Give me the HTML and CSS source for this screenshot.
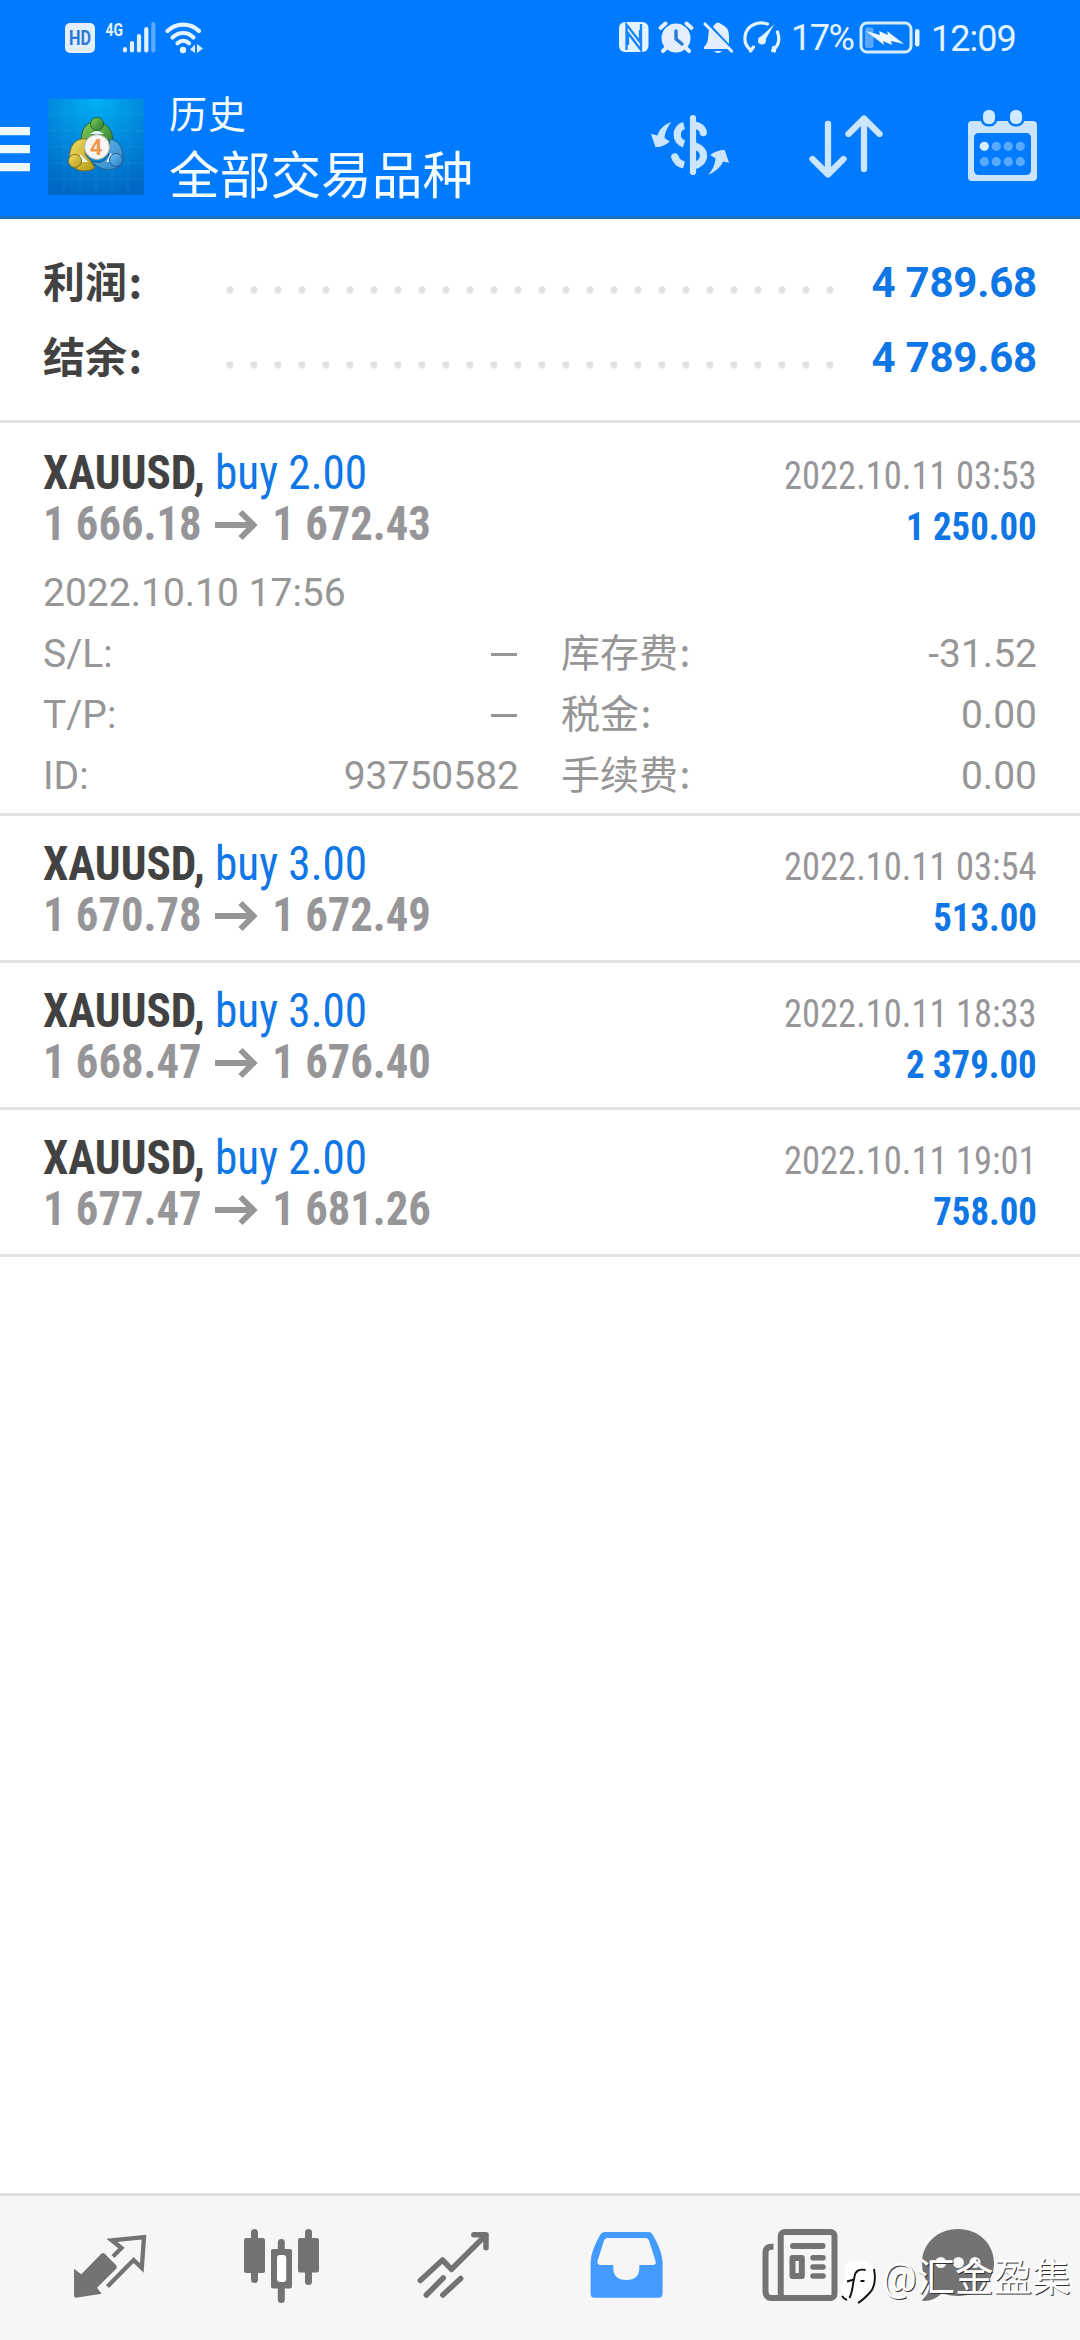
FILE: index.html
```html
<!DOCTYPE html>
<html lang="zh-CN">
<head>
<meta charset="utf-8">
<title>历史</title>
<link rel="stylesheet" href="styles.css">
</head>
<body>
<div class="screen">
  <header class="header">
    <div class="status">
      <svg class="status-hd" viewBox="65 20 31 36"><rect x="65" y="23" width="30" height="30" rx="5" fill="#e3efff"/><text class="hd-text" x="80" y="45" textLength="22" lengthAdjust="spacingAndGlyphs">HD</text></svg>
      <svg class="status-signal" viewBox="105 20 52 36">
        <text class="net-text" x="105.500" y="36" textLength="17.500" lengthAdjust="spacingAndGlyphs">4G</text>
        <g stroke="#e3f1ff" stroke-width="4.200" stroke-linecap="round"><path d="M125 49v1.500M132 43v7.500M139 36v14.500M146.300 29v21.500"/><path d="M153.300 24v26.500" stroke="#5aabff"/></g>
      </svg>
      <svg class="status-wifi" viewBox="164 20 42 36" fill="none" stroke="#e3f4ff" stroke-width="4.200" stroke-linecap="round">
        <path d="M167.500 31C176 22.500 190.500 22.500 199 31M172.500 37.500C178.500 31.500 188 31.500 193.500 37.500M177.500 43.300C181 40 185.500 40 189 43.300"/>
        <circle cx="183" cy="50" r="3.200" fill="#e3f4ff" stroke="none"/>
        <path d="M190 49.500l5-5v8.500zM197 44l6 4.500-6 4.500z" fill="#d7edff" stroke="none"/>
      </svg>
      <span class="status-spacer"></span>
      <svg class="status-icons" viewBox="616 18 170 40">
        <rect x="618" y="22" width="29.500" height="30" rx="6" fill="#e3f4ff"/>
        <path d="M625.500 50V24.500L639 42V30M640 24v26L627 33v12" fill="none" stroke="#1683ff" stroke-width="2.300"/>
        <g fill="#e3efff"><circle cx="675" cy="38" r="14.500"/></g>
        <path d="M659.500 28l5-4.500M690.500 28l-5-4.500M665 48l-3 3M685 48l3 3" stroke="#e3efff" stroke-width="4" stroke-linecap="round"/>
        <path d="M675 31v8l6 5" fill="none" stroke="#2a79d8" stroke-width="3.500" stroke-linecap="round"/>
        <path d="M714 24q3-3 6 0q8 3 8 12v8L712 27zM708 30l20 19h-25v-2q4-4 4-9zM713 51h8q-4 4-8 0z" fill="#e3efff"/>
        <path d="M704 24l26.500 27" stroke="#e3efff" stroke-width="3.200" stroke-linecap="round"/>
        <g fill="none" stroke="#e3f4ff" stroke-width="3.200" stroke-linecap="round"><path d="M750 50C741 44 742 29 753 24.500c4-2 9-2 13.500-.5M776.500 32c2.500 7 1 14-5 18.500"/><path d="M749.500 51l3-4M773.500 51l-1-3.500"/></g>
        <circle cx="761" cy="40.500" r="4" fill="#e3f4ff"/><path d="M758.500 38l15-14-10.500 18z" fill="#e3f4ff"/>
      </svg>
      <span class="status-battery-text">17%</span>
      <svg class="status-battery" viewBox="857 18 64 40">
        <rect x="860" y="23" width="50" height="29" rx="6" fill="none" stroke="#d3ecff" stroke-width="3"/>
        <rect x="864" y="27.500" width="8.500" height="20.500" rx="2" fill="#58a6ff"/>
        <rect x="914" y="29" width="4.500" height="17.500" rx="2.200" fill="#e3f4ff"/>
        <path d="M865 31l14 4-1-4 9 4-1-4 17 13-13-3 1 4-9-4 1 4z" fill="#eef8ff"/>
      </svg>
      <span class="status-time">12:09</span>
    </div>
    <div class="toolbar">
      <svg class="menu" viewBox="0 127 30 45"><path d="M0 127h30v8.300H0zM0 145h30v8.300H0zM0 163h30v8.300H0z" fill="#eef8ff"/></svg>
      <svg class="logo" viewBox="0 0 96 96">
        <defs>
          <radialGradient id="sky" cx=".5" cy="0" r="1"><stop offset="0" stop-color="#00b0f4"/><stop offset=".55" stop-color="#0086db"/><stop offset="1" stop-color="#0068c4"/></radialGradient>
          <linearGradient id="gold" x1="0" y1="0" x2="1" y2="1"><stop offset="0" stop-color="#f3e06a"/><stop offset="1" stop-color="#b59812"/></linearGradient>
          <linearGradient id="leaf" x1="0" y1="0" x2="1" y2="1"><stop offset="0" stop-color="#86cf5c"/><stop offset="1" stop-color="#257b2d"/></linearGradient>
          <linearGradient id="sea" x1="0" y1="0" x2="1" y2="1"><stop offset="0" stop-color="#6fc0f0"/><stop offset="1" stop-color="#2680c8"/></linearGradient>
        </defs>
        <rect width="96" height="96" fill="url(#sky)"/>
        <path d="M16 0v96M32 0v96M48 0v96M64 0v96M80 0v96M0 16h96M0 32h96M0 48h96M0 64h96M0 80h96" stroke="#35b5f2" stroke-opacity=".18"/>
        <path d="M34 46C30 25 46 19 54 24C65 28 68 43 60 52L56 40Q48 30 40 40z" fill="url(#leaf)" stroke="#28632d"/>
        <path d="M39 40C25 38 20 51 22 63C26 73 39 74 47 69L42 61Q34 56 39 42z" fill="url(#gold)" stroke="#716b26"/>
        <path d="M62 40C73 42 77 53 74 64C68 74 51 72 44 62Q54 67 60 57z" fill="url(#sea)" stroke="#245f87"/>
        <path d="M42 35l7-4 7 4zM32 55l-1 8 9 0zM63 54l4 8-9 1z" fill="#e9f5ff"/>
        <circle cx="49" cy="25" r="6.500" fill="url(#leaf)" stroke="#28632d"/>
        <circle cx="27" cy="62" r="6.500" fill="url(#gold)" stroke="#817320"/>
        <circle cx="68" cy="61" r="6.500" fill="url(#sea)" stroke="#245f87"/>
        <circle cx="49" cy="48" r="12.500" fill="#f8f5f5" stroke="#a7b3a4"/>
        <text class="logo-text" x="48" y="56">4</text>
      </svg>
      <div class="titles"><div class="title-small">历史</div><div class="title-large">全部交易品种</div></div>
      <svg class="action-dollar" viewBox="648 105 84 80" fill="none" stroke="#cce5ff" stroke-width="7.300">
        <path d="M671.700 122C664 124 659 130 657.500 135.500L651 134l4.500 13C660 147.500 666 145 669.700 141.500L664.500 138C665 132 668 126 671.700 122zM708.300 174.700C716 172 722 165 723 161.500l6 1.200-4.300-12.700c-4.700-.5-10.700 2-14.400 5l5.200 3.500c-.5 6.500-3.500 12.200-7.200 16.200z" fill="#cce5ff" stroke="none"/>
        <path d="M693 118v54" stroke-width="6.200" stroke-linecap="round"/>
        <path d="M684 125.500C675 128 675 141 684 144M674.800 156.500C676 161 680 164 684 165"/>
        <path d="M695 125.500c4 0 8 3 8.300 7M674.900 157l.2 .5" stroke-linecap="round"/>
        <path d="M693 145.500c14 3 14 17.500 0 20.500"/>
      </svg>
      <svg class="action-sort" viewBox="805 105 84 80" fill="none" stroke="#cce5ff" stroke-width="6.300" stroke-linecap="round" stroke-linejoin="round"><path d="M828 124v50M812.500 159L828 174.500 843.500 159M864 169v-50M848.500 134L864 118.500 879.500 134"/></svg>
      <svg class="action-calendar" viewBox="966 105 74 80">
        <path fill-rule="evenodd" d="M972 121h61q4 0 4 4v52q0 4-4 4h-61q-4 0-4-4v-52q0-4 4-4zm7 12q-5 0-5 5v32q0 5 5 5h47q5 0 5-5v-32q0-5-5-5z" fill="#cce5ff"/>
        <g fill="#d2eaff" stroke="#007aff" stroke-width="2.500"><rect x="981.800" y="108.800" width="14.500" height="16.500" rx="6.500"/><rect x="1008.800" y="108.800" width="14.500" height="16.500" rx="6.500"/></g>
        <g fill="#58aaff"><circle cx="984.300" cy="146.300" r="4.600" fill="#d8ecff"/><circle cx="996.300" cy="146.300" r="4.600"/><circle cx="1008.300" cy="146.300" r="4.600"/><circle cx="1020.300" cy="146.300" r="4.600"/><circle cx="984.300" cy="161.700" r="4.600"/><circle cx="996.300" cy="161.700" r="4.600"/><circle cx="1008.300" cy="161.700" r="4.600"/><circle cx="1020.300" cy="161.700" r="4.600"/></g>
      </svg>
    </div>
  </header>

  <section class="summary">
    <div class="summary-row"><span class="summary-label">利润<i>:</i></span><span class="dots"></span><span class="summary-value">4 789.68</span></div>
    <div class="summary-row"><span class="summary-label">结余<i>:</i></span><span class="dots"></span><span class="summary-value">4 789.68</span></div>
  </section>

  <main class="deals">
    <article class="deal deal-open">
      <div class="deal-line"><span class="symbol"><b>XAUUSD,</b> <span class="side">buy 2.00</span></span><span class="date">2022.10.11 03:53</span></div>
      <div class="deal-line"><span class="prices">1 666.18<svg class="arrow" viewBox="0 0 42 30" preserveAspectRatio="none"><path d="M0 15h38M25.500 2L38.500 15 25.500 28"/></svg>1 672.43</span><span class="profit">1 250.00</span></div>
      <div class="details">
        <div class="detail-time">2022.10.10 17:56</div>
        <div class="detail"><span>S/L:</span><span class="dash"></span></div><div class="detail"><span>库存费<i>:</i></span><span>-31.52</span></div>
        <div class="detail"><span>T/P:</span><span class="dash"></span></div><div class="detail"><span>税金<i>:</i></span><span>0.00</span></div>
        <div class="detail"><span>ID:</span><span>93750582</span></div><div class="detail"><span>手续费<i>:</i></span><span>0.00</span></div>
      </div>
    </article>
    <article class="deal">
      <div class="deal-line"><span class="symbol"><b>XAUUSD,</b> <span class="side">buy 3.00</span></span><span class="date">2022.10.11 03:54</span></div>
      <div class="deal-line"><span class="prices">1 670.78<svg class="arrow" viewBox="0 0 42 30" preserveAspectRatio="none"><path d="M0 15h38M25.500 2L38.500 15 25.500 28"/></svg>1 672.49</span><span class="profit">513.00</span></div>
    </article>
    <article class="deal">
      <div class="deal-line"><span class="symbol"><b>XAUUSD,</b> <span class="side">buy 3.00</span></span><span class="date">2022.10.11 18:33</span></div>
      <div class="deal-line"><span class="prices">1 668.47<svg class="arrow" viewBox="0 0 42 30" preserveAspectRatio="none"><path d="M0 15h38M25.500 2L38.500 15 25.500 28"/></svg>1 676.40</span><span class="profit">2 379.00</span></div>
    </article>
    <article class="deal">
      <div class="deal-line"><span class="symbol"><b>XAUUSD,</b> <span class="side">buy 2.00</span></span><span class="date">2022.10.11 19:01</span></div>
      <div class="deal-line"><span class="prices">1 677.47<svg class="arrow" viewBox="0 0 42 30" preserveAspectRatio="none"><path d="M0 15h38M25.500 2L38.500 15 25.500 28"/></svg>1 681.26</span><span class="profit">758.00</span></div>
    </article>
  </main>

  <nav class="nav">
    <svg class="nav-icon" viewBox="0 0 90 90"><path d="M9 48.700l7.300 5.600L36 34q2-2 4 0l11 11q1.500 2 0 4L32 67.700l4.600 6L11 77.700q-2 0-2-2z" fill="#737373"/><path d="M48 36.500L56.500 28 46.800 20.300 79 17.200 76.800 48 68.600 40 42.500 66.500" fill="none" stroke="#737373" stroke-width="4.300"/></svg>
    <svg class="nav-icon" viewBox="0 0 90 90"><g fill="#737373"><rect x="8" y="18" width="21" height="35" rx="2"/><rect x="35" y="29" width="21" height="39.500" rx="2"/><rect x="62" y="18" width="21" height="34.500" rx="2"/></g><path d="M18.500 12.500v47M45.300 22.500v57M72.500 12.500v49" stroke="#737373" stroke-width="7" stroke-linecap="round"/><rect x="41" y="35" width="9.200" height="27" rx="3" fill="#fff"/></svg>
    <svg class="nav-icon" viewBox="0 0 90 90"><path d="M12.300 60.500L34.500 40l9 9.300L78 15M65.800 14.700H78v13M18.300 75L35.200 58M34.800 75L52.700 58.500" fill="none" stroke="#737373" stroke-width="5.500" stroke-linecap="round" stroke-linejoin="round"/></svg>
    <svg class="nav-icon" viewBox="0 0 90 90"><path fill-rule="evenodd" d="M24 12h43q3.500 0 5.500 4Q81 31 81.600 42v31.500q0 4.200-4 4.200h-64q-4 0-4-4.200V42Q10 31 18.500 16q2-4 5.500-4zm2 6q-2 0-3 2.500L16.500 41q-.5 4 3 4H32.300v3q0 12 13 12t13-12v-3H72q3.500 0 2.500-4L68 20.500q-1-2.500-3-2.500z" fill="#439bff"/></svg>
    <svg class="nav-icon" viewBox="0 0 90 90" fill="none" stroke="#737373"><path d="M18.500 26.700h-2q-6 0-6 6v38q0 7.300 6 7.300H30" stroke-width="6"/><rect x="25.700" y="12" width="53.800" height="66" rx="4" stroke-width="6"/><path d="M38 26h29.500" stroke-width="6" stroke-linecap="round"/><rect x="37.500" y="38" width="9.300" height="18" stroke-width="6" stroke-linejoin="round"/><path d="M58 37.700h10M58 47h10M58 56h10" stroke-width="5.500" stroke-linecap="round"/></svg>
    <svg class="nav-icon" viewBox="0 0 90 90"><path d="M45 9C66 9 81 24 81 43S66 76 45 76Q36 76 29 73Q21 81 11 81Q8 81 10 79Q17 73 16 65Q9 56 9 43C9 24 24 9 45 9z" fill="#737373"/><g fill="#f7f7f7"><circle cx="27.800" cy="42.500" r="5.500"/><circle cx="45.400" cy="42.500" r="5.500"/><circle cx="62" cy="42.500" r="5.500"/></g></svg>
  </nav>
  <div class="watermark">
    <svg class="watermark-logo" viewBox="0 0 38 44"><path d="M7 3Q18-1 29 4Q36 8 35 24Q33 34 26 38Q19 39 17 44L18 38H8Q2 36 1 30L5 16Q3 8 7 3z" fill="#fff"/><path d="M25.500 11Q16 9 14.500 17.500L13 25Q12 34 9.500 39M7 22.500L14 20.500M20.500 22h4M34 10Q37 26 30 33.500T18 44M2 37q2 3 5 4" fill="none" stroke="#111" stroke-width="1.900"/></svg>
    <span class="watermark-text">@汇金盈集</span>
  </div>
</div>
</body>
</html>
```
FILE: styles.css
```css
* { box-sizing: border-box; }
body { margin: 0; background: #fff; font-family: Roboto, "Noto Sans CJK SC", sans-serif; }
svg { display: block; flex: none; overflow: visible; }
i { font-style: normal; font-family: "Noto Sans CJK SC", sans-serif; line-height: 0; margin-left: 1.5px; }
.screen { position: relative; display: flex; flex-direction: column; width: 1080px; height: 2340px; background: #fff; overflow: hidden; }

.header { height: 219px; flex: none; background: #007aff; border-bottom: 3px solid #1a6fc0; }
.status { display: flex; align-items: center; height: 76px; padding: 0 66px 0 65px; color: #e3f4ff; font-size: 36px; white-space: nowrap; }
.status-hd { width: 31px; height: 36px; }
.hd-text { font: bold 20px Roboto, sans-serif; text-anchor: middle; fill: #2a79d8; }
.status-signal { width: 52px; height: 36px; margin-left: 9px; }
.net-text { font: bold 19px Roboto, sans-serif; fill: #e3f1ff; }
.status-wifi { width: 42px; height: 36px; margin-left: 7px; }
.status-spacer { flex: 1; }
.status-icons { width: 170px; height: 40px; }
.status-battery-text { width: 67px; padding-left: 4px; letter-spacing: -1.5px; }
.status-battery { width: 64px; height: 40px; margin-left: 4px; }
.status-time { width: 83px; margin-left: 9px; padding-top: 1px; letter-spacing: -1px; }

.toolbar { display: flex; align-items: flex-start; height: 140px; }
.menu { width: 30px; height: 45px; margin-top: 51px; }
.logo { width: 96px; height: 96px; margin: 23px 0 0 18px; }
.logo-text { font: bold 22px Roboto, sans-serif; text-anchor: middle; fill: #f0974a; }
.titles { width: 479px; margin: 14px 0 0 25px; color: #f4fcff; white-space: nowrap; }
.title-small { font-size: 38px; line-height: 51px; letter-spacing: 1px; }
.title-large { font-size: 50.7px; line-height: 72px; }
.action-dollar { width: 84px; height: 80px; margin-top: 29px; }
.action-sort { width: 84px; height: 80px; margin: 29px 0 0 73px; }
.action-calendar { width: 74px; height: 80px; margin: 29px 0 0 77px; }

.summary { height: 204px; flex: none; padding: 26px 43px 0; border-bottom: 3px solid #e4e4e4; }
.summary-row { display: flex; height: 75px; line-height: 75px; font-size: 42px; font-weight: 700; }
.summary-label { width: 175px; padding-top: 1px; color: #424242; }
.dots { width: 624px; background: radial-gradient(circle at 12px 45px, #e2e2e2 3.2px, transparent 4px) 0 0 / 24px 75px repeat-x; }
.summary-value { flex: 1; text-align: right; letter-spacing: -.2px; color: #0f76e6; }

.deals { flex: 1; }
.deal { height: 147px; padding: 22px 43px 0; border-bottom: 3px solid #e4e4e4; }
.deal-open { height: 393px; padding-top: 24px; }
.deal-line { display: flex; justify-content: space-between; align-items: baseline; height: 51px; line-height: 51px; font-size: 48px; font-stretch: 75%; font-family: "Roboto Condensed", Roboto, sans-serif; white-space: nowrap; }
.symbol { transform: scaleX(.941); transform-origin: left; }
.symbol b { color: #424242; }
.side { color: #0f76e6; }
.date { font-size: 39px; color: #969698; transform: scaleX(.937); transform-origin: right; }
.prices { font-weight: 700; color: #969698; transform: scaleX(.93); transform-origin: left; }
.arrow { display: inline-block; width: 45px; height: 30px; margin: 0 17px 0 14px; vertical-align: 0; fill: none; stroke: #969698; stroke-width: 6px; }
.profit { font-size: 39px; font-weight: 700; color: #0f76e6; transform: scaleX(.943); transform-origin: right; }
.details { display: grid; grid-template-columns: 476px 476px; column-gap: 42px; margin-top: 14px; font-size: 39px; line-height: 61px; color: #969696; }
.detail-time { grid-column: 1 / -1; }
.detail { display: flex; justify-content: space-between; height: 61px; }
.dash { width: 26px; height: 3px; margin: 29px 2px 0 0; background: #969696; }

.nav { display: grid; grid-template-columns: 171px 172px 173px 174px 158px 1fr; height: 147px; padding: 24px 0 0 65px; background: #f6f6f6; border-top: 3px solid #e0e0e0; }
.nav-icon { width: 90px; height: 90px; }

.watermark { position: absolute; left: 840px; top: 2253px; display: flex; align-items: center; height: 50px; color: #fff; }
.watermark-logo { width: 38px; height: 44px; margin-top: 6px; }
.watermark-text { margin-left: 4px; font-size: 38.5px; line-height: 50px; white-space: nowrap; text-shadow: 1px 1px 0 #333; }
```
